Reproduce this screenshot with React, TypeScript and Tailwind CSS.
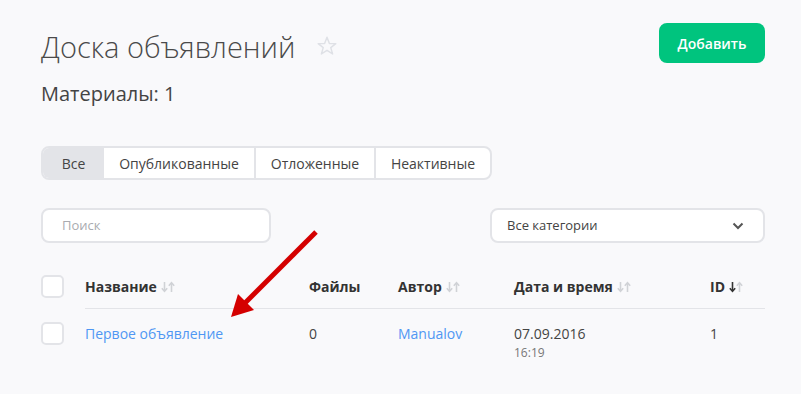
import React from "react";

function Sort({ active }: { active?: boolean }) {
  return (
    <svg width="14" height="12" viewBox="0 0 14 12" className="ml-[4px] inline-block">
      <g fill="none" strokeWidth="1.6" strokeLinecap="butt">
        <g stroke={active ? "#333333" : "#d0d2d6"}>
          <line x1="3.5" y1="1" x2="3.5" y2="10" />
          <polyline points="0.8,7.3 3.5,10.3 6.2,7.3" strokeLinejoin="miter" />
        </g>
        <g stroke="#d0d2d6">
          <line x1="10.5" y1="2" x2="10.5" y2="11" />
          <polyline points="7.8,4.7 10.5,1.7 13.2,4.7" strokeLinejoin="miter" />
        </g>
      </g>
    </svg>
  );
}

function Checkbox() {
  return <div className="w-[23px] h-[23px] rounded-[5px] border-2 border-[#e3e4e8] bg-white" />;
}

export default function App() {
  const font = { fontFamily: '"Open Sans", "Noto Sans", sans-serif' };
  return (
    <div className="relative w-[801px] h-[394px] bg-[#f9f9fb] overflow-hidden" style={font}>
      <div className="pl-[41px] pr-[36px] pt-[23px]">
        <div className="flex justify-between items-start">
          <div className="flex items-center h-[48px] mt-[0px]">
            <h1 className="text-[29px] font-light text-[#4a4a4a] leading-[48px] tracking-[0px]">Доска объявлений</h1>
            <svg width="22" height="22" viewBox="0 0 24 24" className="ml-[21px] mt-[-2px]">
              <polygon
                points="12,2.5 14.6,9.2 21.6,9.4 16.1,13.8 18.1,20.7 12,16.7 5.9,20.7 7.9,13.8 2.4,9.4 9.4,9.2"
                fill="none"
                stroke="#dfe1e6"
                strokeWidth="1.6"
                strokeLinejoin="round"
              />
            </svg>
          </div>
          <button className="w-[106px] h-[40px] rounded-[8px] bg-[#00c47e] text-white text-[14px] font-semibold">
            Добавить
          </button>
        </div>
        <div className="mt-[9px] text-[20px] text-[#444] leading-[28px]">Материалы: 1</div>

        <div className="mt-[38px] flex w-[451px] h-[34px] rounded-[8px] border-2 border-[#e3e4e8] overflow-hidden bg-white text-[14px] text-[#444]">
          <div className="w-[61px] flex items-center justify-center bg-[#e3e4e8]">Все</div>
          <div className="w-[150px] flex items-center justify-center">Опубликованные</div>
          <div className="w-[120px] flex items-center justify-center border-l-2 border-[#e3e4e8]">Отложенные</div>
          <div className="flex-1 flex items-center justify-center border-l-2 border-[#e3e4e8]">Неактивные</div>
        </div>

        <div className="mt-[28px] flex justify-between">
          <div className="w-[230px] h-[35px] rounded-[8px] border-2 border-[#e3e4e8] bg-white flex items-center pl-[19px] text-[13px] text-[#a9abb0]">
            Поиск
          </div>
          <div className="w-[275px] h-[35px] rounded-[8px] border-2 border-[#e3e4e8] bg-white flex items-center justify-between pl-[15px] pr-[19px] text-[13px] text-[#444]">
            <span>Все категории</span>
            <svg width="12" height="8" viewBox="0 0 12 8">
              <polyline points="1.5,1.5 6,6 10.5,1.5" fill="none" stroke="#555" strokeWidth="2" />
            </svg>
          </div>
        </div>

        <div className="mt-[32px] flex items-start">
          <div className="w-[44px]">
            <Checkbox />
          </div>
          <div className="flex-1 h-[34px] border-b border-[#e3e4e8] flex items-start text-[14px] font-bold text-[#333] leading-[23px]">
            <div className="w-[224px] flex items-center">Название<Sort /></div>
            <div className="w-[89px]">Файлы</div>
            <div className="w-[116px] flex items-center">Автор<Sort /></div>
            <div className="w-[196px] flex items-center">Дата и время<Sort /></div>
            <div className="flex items-center">ID<Sort active /></div>
          </div>
        </div>

        <div className="mt-[13px] flex items-start">
          <div className="w-[44px]">
            <Checkbox />
          </div>
          <div className="flex-1 flex items-start text-[14px] text-[#444] leading-[23px]">
            <div className="w-[224px] text-[#4f97f3]">Первое объявление</div>
            <div className="w-[89px]">0</div>
            <div className="w-[116px] text-[#4f97f3]">Manualov</div>
            <div className="w-[196px]">
              <div>07.09.2016</div>
              <div className="text-[12px] leading-[16px] text-[#777]">16:19</div>
            </div>
            <div>1</div>
          </div>
        </div>
      </div>

      <svg className="absolute left-0 top-0 pointer-events-none" width="801" height="394" viewBox="0 0 801 394">
        <line x1="316" y1="232" x2="244" y2="304" stroke="#d40000" strokeWidth="5" />
        <polygon points="231,317 238,294 254,310" fill="#d40000" />
      </svg>
    </div>
  );
}
